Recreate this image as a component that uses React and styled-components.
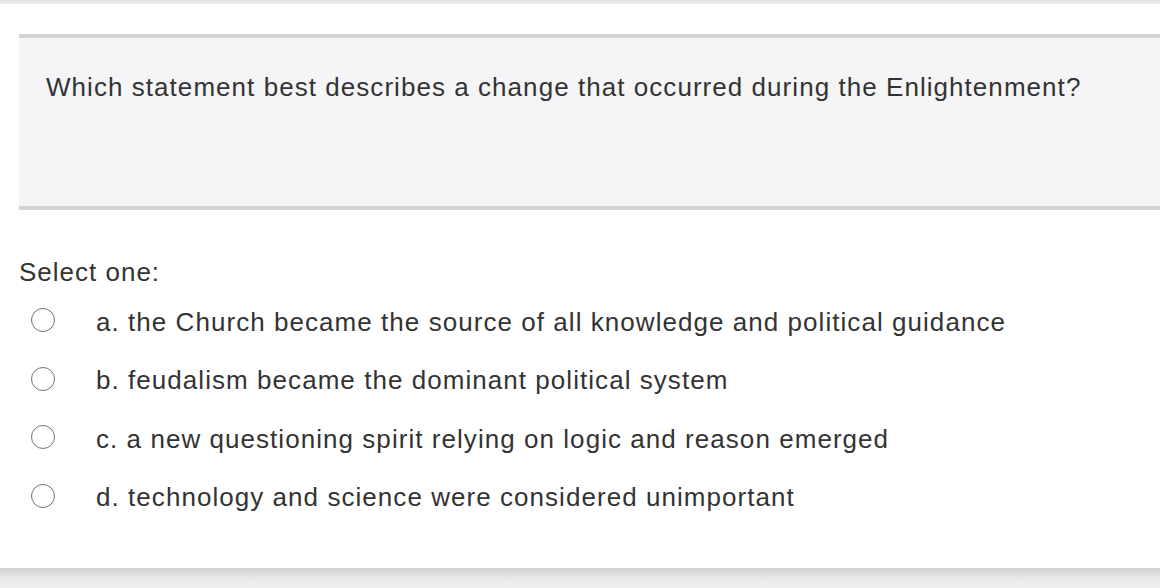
import React from "react";
import styled, { createGlobalStyle } from "styled-components";

const Global = createGlobalStyle`
  html, body { margin: 0; padding: 0; }
  body {
    background: #f2f2f2;
    font-family: "Liberation Sans", Arial, Helvetica, sans-serif;
    overflow: hidden;
  }
`;

const TopEdge = styled.div`
  height: 4px;
  background: linear-gradient(#e4e4e4, #ececec);
`;

const Card = styled.div`
  background: #ffffff;
  height: 564px;
  padding: 30px 0 0 19px;
  box-sizing: border-box;
  display: flex;
  flex-direction: column;
`;

const BottomEdge = styled.div`
  height: 20px;
  background: linear-gradient(#cfcfcf, #e6e6e6 45%, #f2f2f2);
`;

const QuestionBox = styled.div`
  background: #f5f5f7;
  border-top: 4px solid #d3d3d3;
  border-bottom: 4px solid #d3d3d3;
  height: 176px;
  padding: 34px 0 0 27px;
  box-sizing: border-box;
  color: #333333;
  font-size: 26px;
  letter-spacing: 1.05px;
`;

const Prompt = styled.div`
  margin-top: 47px;
  font-size: 26px;
  letter-spacing: 1px;
  color: #333333;
`;

const Options = styled.div`
  display: flex;
  flex-direction: column;
  margin-top: 5px;
`;

const Option = styled.label`
  display: flex;
  align-items: center;
  height: 58.5px;
  color: #333333;
  font-size: 26px;
  letter-spacing: 1.05px;
`;

const Radio = styled.span`
  width: 22px;
  height: 22px;
  border: 1.6px solid #707070;
  border-radius: 50%;
  margin-left: 12px;
  margin-right: 41px;
  margin-top: -4px;
  flex: none;
`;

const options = [
  "a. the Church became the source of all knowledge and political guidance",
  "b. feudalism became the dominant political system",
  "c. a new questioning spirit relying on logic and reason emerged",
  "d. technology and science were considered unimportant",
];

export default function App() {
  return (
    <>
      <Global />
      <TopEdge />
      <Card>
        <QuestionBox>
          Which statement best describes a change that occurred during the Enlightenment?
        </QuestionBox>
        <Prompt>Select one:</Prompt>
        <Options>
          {options.map((o) => (
            <Option key={o}>
              <Radio />
              <span>{o}</span>
            </Option>
          ))}
        </Options>
      </Card>
      <BottomEdge />
    </>
  );
}
